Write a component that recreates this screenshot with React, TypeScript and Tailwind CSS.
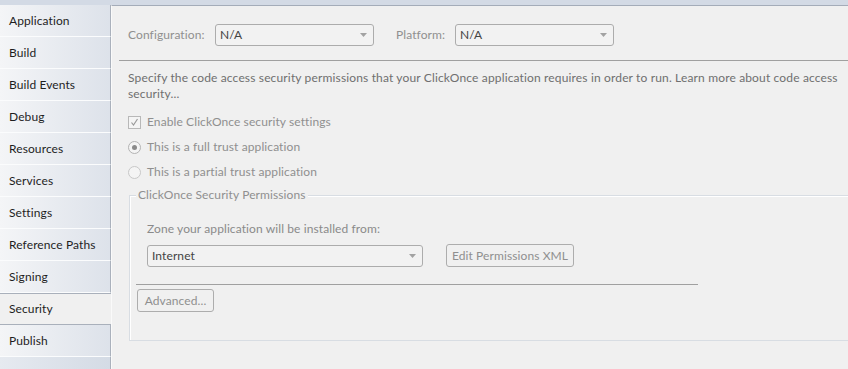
import { FC } from 'react'

const tabs = [
  'Application',
  'Build',
  'Build Events',
  'Debug',
  'Resources',
  'Services',
  'Settings',
  'Reference Paths',
  'Signing',
  'Security',
  'Publish',
]

const Arrow: FC = () => (
  <svg width="7" height="4" viewBox="0 0 7 4" className="shrink-0">
    <path d="M0 0h7L3.5 4z" fill="#a2a2a2" />
  </svg>
)

type SelectProps = { value: string; width: string }

const Select: FC<SelectProps> = ({ value, width }) => (
  <div
    className={`flex h-[22px] items-center justify-between rounded-[3px] border border-[#acacac] bg-[#f2f2f2] pl-[4px] pr-[6px] text-[#444] ${width}`}
  >
    <span>{value}</span>
    <Arrow />
  </div>
)

const Sidebar: FC = () => (
  <div className="flex w-[111px] shrink-0 flex-col">
    {tabs.map((t) =>
      t === 'Security' ? (
        <div
          key={t}
          className="flex h-[32px] items-center border-y border-[#a9b0bb] bg-[#f0f0f0] pl-[9px] text-[#1e1e1e]"
        >
          {t}
        </div>
      ) : (
        <div
          key={t}
          className="flex h-[32px] items-center border-r border-b border-r-[#aab1bc] border-b-[#fbfcfd] bg-gradient-to-r from-[#f4f5f7] to-[#dde2ea] pl-[9px] text-[#1e1e1e]"
        >
          {t}
        </div>
      ),
    )}
    <div className="flex-1 border-r border-[#aab1bc] bg-gradient-to-r from-[#e6eaf0] to-[#d4dbe5]" />
  </div>
)

const App: FC = () => {
  return (
    <div
      className="flex h-[369px] w-[848px] flex-col overflow-hidden bg-[#d3dae5] text-[12px] leading-[16px] tracking-[0.1px]"
      style={{ fontFamily: 'Lato, "Liberation Sans", sans-serif' }}
    >
      <div className="h-[5px] shrink-0 bg-[#d3dae5]" />
      <div className="flex min-h-0 flex-1">
        <Sidebar />
        <div className="flex-1 overflow-hidden border-t border-l border-t-[#a4acb9] border-l-[#fafafa] bg-[#f0f0f0]">
          {/* configuration row */}
          <div className="flex items-center pt-[18px] pl-[16px] text-[#8f8f8f]">
            <span className="w-[87px]">Configuration:</span>
            <Select value="N/A" width="w-[159px]" />
            <span className="ml-[22px] w-[59px]">Platform:</span>
            <Select value="N/A" width="w-[159px]" />
          </div>
          <div className="mt-[14px] ml-[7px] h-px bg-[#a0a0a0]" />

          <p className="mt-[9px] pr-[10px] pl-[16px] tracking-[0.15px] text-[#6f6f6f]">
            Specify the code access security permissions that your ClickOnce application requires in
            order to run. Learn more about code access security...
          </p>

          <div className="mt-[12px] flex items-center gap-[6px] pl-[16px] text-[#8f8f8f]">
            <span className="flex h-[13px] w-[13px] items-center justify-center border border-[#b8b8b8] bg-[#f4f4f4]">
              <svg width="9" height="9" viewBox="0 0 9 9">
                <path d="M1.5 4.5l2 2.5 4-6" fill="none" stroke="#9a9a9a" strokeWidth="1.2" />
              </svg>
            </span>
            <span>Enable ClickOnce security settings</span>
          </div>
          <div className="mt-[9px] flex items-center gap-[6px] pl-[16px] text-[#8f8f8f]">
            <span className="flex h-[13px] w-[13px] items-center justify-center rounded-full border border-[#b3b3b3] bg-[#f4f4f4]">
              <span className="h-[5px] w-[5px] rounded-full bg-[#8a8a8a]" />
            </span>
            <span>This is a full trust application</span>
          </div>
          <div className="mt-[9px] flex items-center gap-[6px] pl-[16px] text-[#8f8f8f]">
            <span className="h-[13px] w-[13px] rounded-full border border-[#c8c8c8] bg-[#f4f4f4]" />
            <span>This is a partial trust application</span>
          </div>

          {/* group box */}
          <div className="relative mt-[15px] ml-[17px] mr-[-20px] h-[146px] border border-[#d8dde3] shadow-[1px_1px_0_#ffffff_inset]">
            <span className="absolute top-[-9px] left-[6px] bg-[#f0f0f0] px-[2px] text-[#8f8f8f]">
              ClickOnce Security Permissions
            </span>
            <div className="pt-[25px] pl-[17px] text-[#8a8a8a]">
              Zone your application will be installed from:
            </div>
            <div className="mt-[7px] flex items-center pl-[17px]">
              <Select value="Internet" width="w-[276px]" />
              <div className="ml-[23px] flex h-[23px] w-[128px] items-center justify-center rounded-[3px] border border-[#adadad] text-[#8f8f8f]">
                Edit Permissions XML
              </div>
            </div>
            <div className="mt-[17px] ml-[6px] h-px w-[562px] bg-[#a0a0a0]" />
            <div className="mt-[4px] ml-[7px] flex h-[23px] w-[77px] items-center justify-center rounded-[3px] border border-[#adadad] text-[#8f8f8f]">
              Advanced...
            </div>
          </div>
        </div>
      </div>
    </div>
  )
}

export default App
